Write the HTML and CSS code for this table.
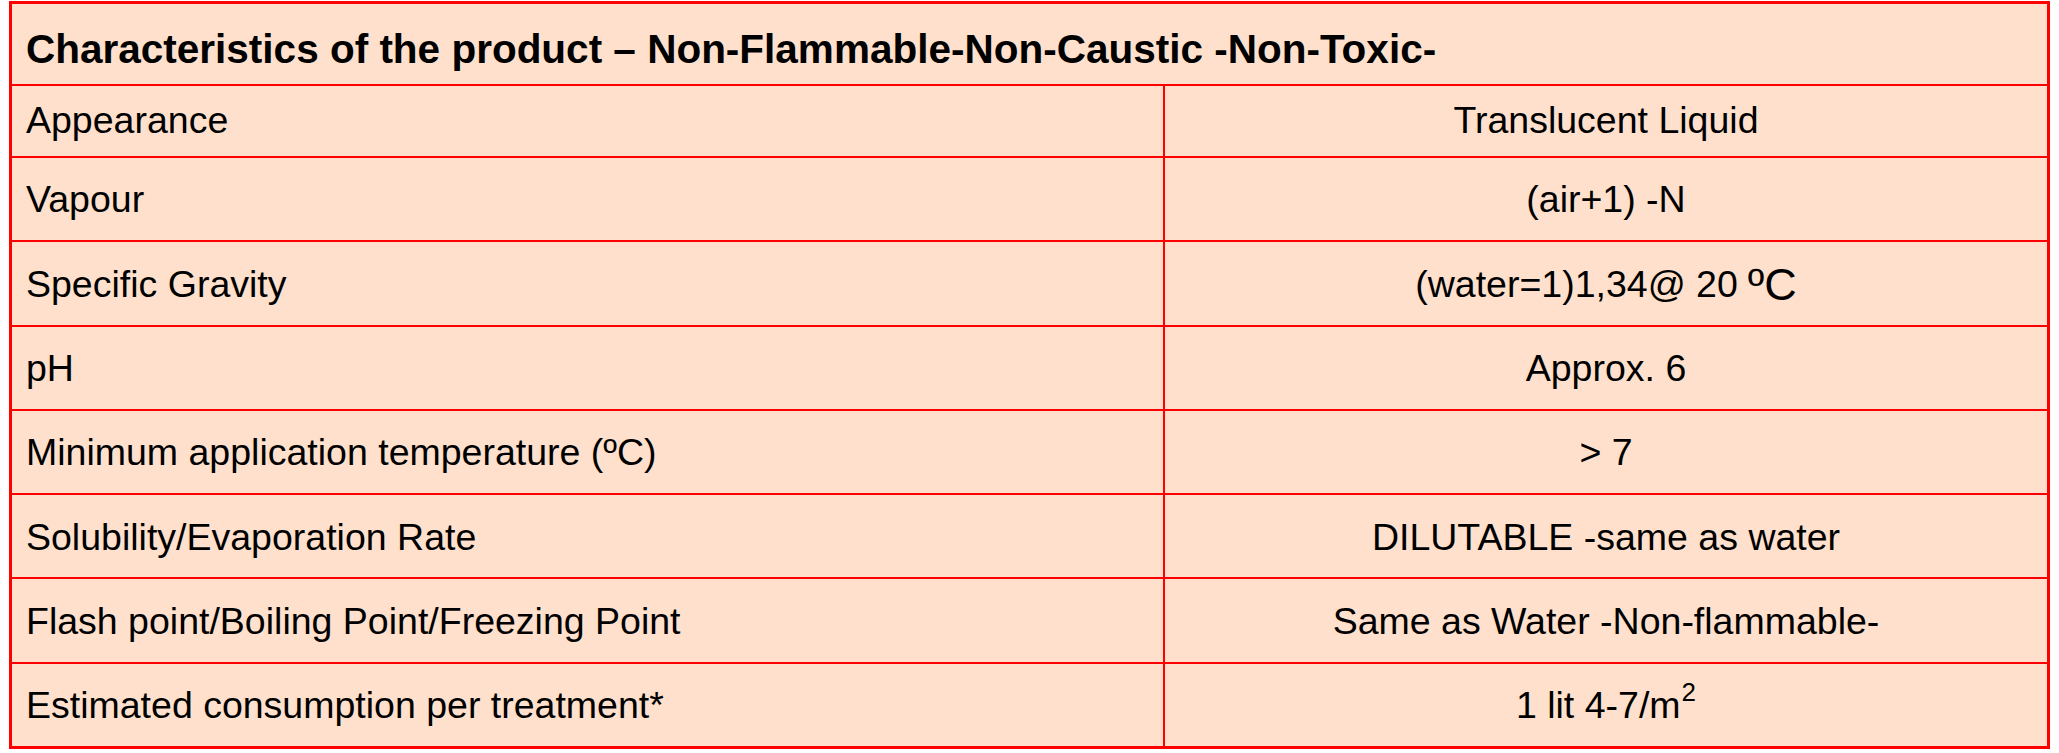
FILE: index.html
```html
<!DOCTYPE html>
<html lang="en">
<head>
<meta charset="utf-8">
<title>Characteristics of the product</title>
<link rel="stylesheet" href="styles.css">
</head>
<body>
<div class="sheet">
  <div class="cell head">Characteristics of the product – Non-Flammable-Non-Caustic -Non-Toxic-</div>

  <div class="cell label first">Appearance</div>
  <div class="cell value first">Translucent Liquid</div>

  <div class="cell label">Vapour</div>
  <div class="cell value">(air+1) -N</div>

  <div class="cell label">Specific Gravity</div>
  <div class="cell value">(water=1)1,34@ 20 <span class="big">ºC</span></div>

  <div class="cell label">pH</div>
  <div class="cell value">Approx. 6</div>

  <div class="cell label">Minimum application temperature (ºC)</div>
  <div class="cell value">&gt; 7</div>

  <div class="cell label">Solubility/Evaporation Rate</div>
  <div class="cell value">DILUTABLE -same as water</div>

  <div class="cell label">Flash point/Boiling Point/Freezing Point</div>
  <div class="cell value">Same as Water -Non-flammable-</div>

  <div class="cell label">Estimated consumption per treatment*</div>
  <div class="cell value">1 lit 4-7/m<sup>2</sup></div>
</div>
</body>
</html>
```

FILE: styles.css
```css
html, body {
  margin: 0;
  padding: 0;
  background: #ffffff;
}

body {
  font-family: "Liberation Sans", Arial, sans-serif;
  color: #000000;
}

.sheet {
  margin: 1px 0 0 9px;
  width: 2041px;
  height: 748px;
  box-sizing: border-box;
  border: 3px solid #ff0000;
  background: #ffe0cc;
  display: grid;
  grid-template-columns: 1151px 1fr;
  grid-template-rows: 80px 72px repeat(7, 1fr);
}

.cell {
  display: flex;
  align-items: center;
  box-sizing: border-box;
  border-top: 2px solid #ff0000;
  font-size: 37.5px;
  line-height: 1;
  white-space: nowrap;
  padding-top: 2px;
}

.first {
  padding-top: 0;
}

.head {
  grid-column: 1 / 3;
  border-top: none;
  font-weight: bold;
  font-size: 40.5px;
  padding: 10px 0 0 14px;
}

.label {
  padding-left: 14px;
}

.value {
  justify-content: center;
  border-left: 2px solid #ff0000;
}

.big {
  font-size: 45px;
  margin-left: 10px;
}

sup {
  font-size: 26px;
  line-height: 0;
  position: relative;
  top: -14px;
  margin-left: 1px;
}
```
